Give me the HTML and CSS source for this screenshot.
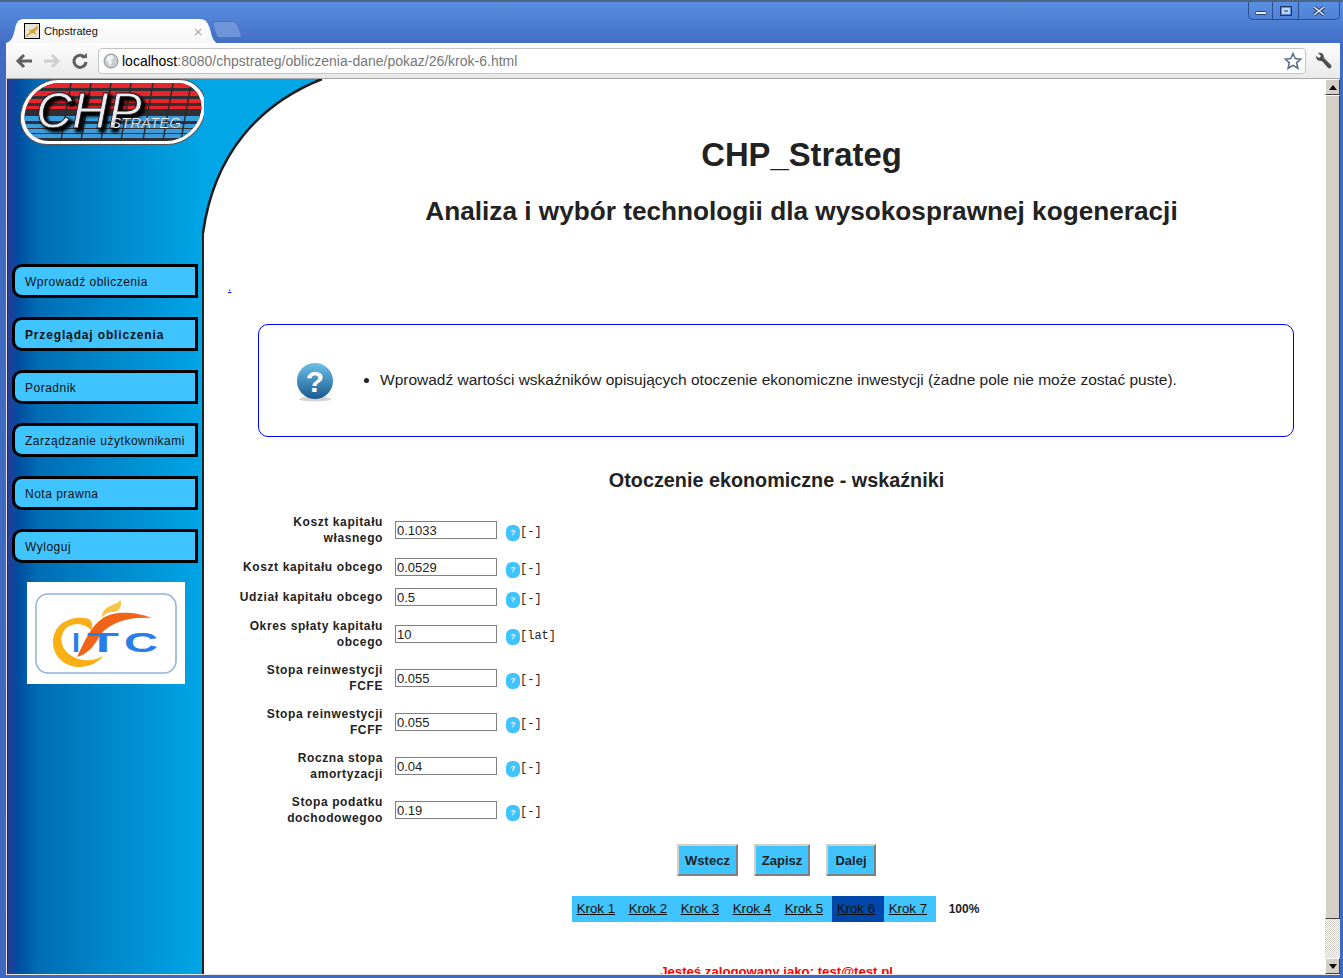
FILE: index.html
```html
<!DOCTYPE html>
<html lang="pl">
<head>
    <meta charset="UTF-8">
    <title>Chpstrateg</title>
    <link rel="stylesheet" href="styles.css">
</head>
<body>
<div class="window">
    <!-- Pasek tytulu i karty -->
    <div class="tabstrip">
        <div class="tab">
            <svg class="favicon" width="16" height="16" viewBox="0 0 16 16">
                <rect x="0.5" y="0.5" width="15" height="15" fill="#e8e4d8" stroke="#000"/>
                <path d="M2 12 L6 9 L5 6 L7 7 L11 5 L13 2 L14 6 L11 8 L12 12 L9 10 L6 11 L3 14 Z" fill="#d8a23c"/>
            </svg>
            <span class="tab-title">Chpstrateg</span>
            <span class="tab-close">&#215;</span>
        </div>
        <div class="new-tab"></div>
        <div class="caption">
            <div class="caption-btn cb-min"><svg width="12" height="4" viewBox="0 0 12 4"><rect x="0.5" y="0.5" width="11" height="3" rx="1" fill="#e8eefa" stroke="#24406f"/></svg></div>
            <div class="caption-btn cb-max"><svg width="12" height="10" viewBox="0 0 12 10"><rect x="0.5" y="0.5" width="11" height="9" fill="none" stroke="#1f3a68"/><rect x="3" y="3" width="6" height="4" fill="none" stroke="#e8eefa" stroke-width="1.5"/></svg></div>
            <div class="caption-btn cb-close"><svg width="12" height="10" viewBox="0 0 12 10"><path d="M1 1 L11 9 M11 1 L1 9" stroke="#24406f" stroke-width="3.4"/><path d="M1 1 L11 9 M11 1 L1 9" stroke="#e8eefa" stroke-width="1.6"/></svg></div>
        </div>
    </div>

    <!-- Pasek narzedzi -->
    <div class="toolbar">
        <svg class="nav-icon" width="18" height="16" viewBox="0 0 18 16"><path d="M9 2 L3 8 L9 14 M3 8 H17" fill="none" stroke="#5f5f5f" stroke-width="3"/></svg>
        <svg class="nav-icon" width="18" height="16" viewBox="0 0 18 16"><path d="M9 2 L15 8 L9 14 M15 8 H1" fill="none" stroke="#cfcfcf" stroke-width="3"/></svg>
        <svg class="nav-icon" width="18" height="16" viewBox="0 0 18 16"><path d="M14 5 A6 6 0 1 0 15 9" fill="none" stroke="#5f5f5f" stroke-width="3"/><path d="M10 5 H16 V0 Z" fill="#5f5f5f"/></svg>
        <div class="omnibox">
            <svg class="globe" width="16" height="16" viewBox="0 0 16 16">
                <circle cx="8" cy="8" r="7" fill="#c9ced4" stroke="#8a8f96"/>
                <path d="M5 3 L9 2 L11 5 L8 7 L9 10 L7 13 L5 9 L3 7 Z" fill="#f2f3f5"/>
            </svg>
            <span class="url"><b>localhost</b>:8080/chpstrateg/obliczenia-dane/pokaz/26/krok-6.html</span>
            <svg class="star" width="18" height="18" viewBox="0 0 18 18"><path d="M9 1.5 L11.2 6.6 L16.8 7.1 L12.6 10.8 L13.9 16.3 L9 13.4 L4.1 16.3 L5.4 10.8 L1.2 7.1 L6.8 6.6 Z" fill="#fff" stroke="#5e6e8c" stroke-width="1.6"/></svg>
        </div>
        <svg class="wrench" width="18" height="18" viewBox="0 0 18 18"><path d="M1 4 L4 6 L6 4 L3 1 C7 0 9 2 9 6 L16 13 C17.500 15 15 17.500 13 16 L7 9 C3 9 1 8 1 4 Z" fill="#505050"/></svg>
    </div>

    <!-- Strona -->
    <div class="viewport">
        <aside class="sidebar">
            <svg class="chp-logo" width="186" height="67" viewBox="0 0 186 67">
                <defs>
                    <clipPath id="pill"><rect x="5" y="4" width="176" height="58" rx="29"/></clipPath>
                    <filter id="soft" x="-10%" y="-20%" width="120%" height="140%"><feGaussianBlur stdDeviation="1.800"/></filter>
                </defs>
                <g transform="translate(5.800 0) skewX(-10)">
                    <rect x="1" y="0.500" width="184" height="65" rx="32" fill="#fff" stroke="#555"/>
                    <g clip-path="url(#pill)">
                        <rect x="0" y="0" width="186" height="66" fill="#303034"/>
                        <g fill="#e8252a">
                            <rect x="0" y="4" width="186" height="5"/>
                            <rect x="0" y="12" width="186" height="5"/>
                            <rect x="0" y="20" width="186" height="4"/>
                            <rect x="0" y="27" width="186" height="3"/>
                        </g>
                        <g fill="#3a9ede">
                            <rect x="0" y="37" width="186" height="5"/>
                            <rect x="0" y="45" width="186" height="4"/>
                            <rect x="0" y="50" width="186" height="4"/>
                            <rect x="0" y="55" width="186" height="4"/>
                        </g>
                        <path d="M46 0 V66 M66 0 V66 M86 0 V66 M106 0 V66 M128 0 V66 M148 0 V66 M166 0 V66" stroke="#2a2a2e" stroke-width="1.500"/>
                    </g>
                </g>
                <text class="chp-big-shadow" x="19" y="52" filter="url(#soft)">CHP</text>
                <text class="chp-big" x="16" y="49">CHP</text>
                <text class="chp-small" x="91" y="49" textLength="70" lengthAdjust="spacingAndGlyphs">STRATEG</text>
            </svg>
            <nav class="menu">
                <a href="#">Wprowadź obliczenia</a>
                <a href="#" class="active">Przeglądaj obliczenia</a>
                <a href="#">Poradnik</a>
                <a href="#">Zarządzanie użytkownikami</a>
                <a href="#">Nota prawna</a>
                <a href="#">Wyloguj</a>
            </nav>
            <div class="itc-box">
                <svg width="158" height="102" viewBox="0 0 158 102">
                    <rect x="9" y="12" width="140" height="79" rx="12" fill="#fff" stroke="#8fb2dc" stroke-width="1.500"/>
                    <path d="M50 75 C62 72 68 62 74 52 C82 42 100 34 125 36 C110 30 88 28 76 36 C64 44 58 58 50 75 Z" fill="#f0641a"/>
                    <path d="M62 37 C44 32 26 42 26 60 C26 76 40 86 54 85 C64 84 72 80 76 74 C66 80 52 80 42 72 C32 64 32 50 42 44 C50 40 58 42 64 48 C66 44 66 40 62 37 Z" fill="#f9b016"/>
                    <path d="M75 36 C74 28 82 24 88 22 C91 21 93 19 93 17 C96 24 92 30 86 30 C81 30 77 32 75 36 Z" fill="#f8c44a"/>
                    <text class="itc-text" x="45" y="70" textLength="8" lengthAdjust="spacingAndGlyphs">I</text>
                    <text class="itc-text" x="60" y="70" textLength="32" lengthAdjust="spacingAndGlyphs">T</text>
                    <text class="itc-text" x="97" y="70" textLength="34" lengthAdjust="spacingAndGlyphs">C</text>
                </svg>
            </div>
        </aside>

        <main class="content">
            <svg class="corner" width="124" height="172" viewBox="-3 0 124 172">
                <path d="M118 0 C55 25 10 75 -1 154 L0 154 L0 0 Z" fill="#00a6e6"/>
                <path d="M118 0 C55 25 10 75 -1 154" fill="none" stroke="#1a1a1a" stroke-width="2.500"/>
            </svg>

            <h1>CHP_Strateg</h1>
            <h2>Analiza i wybór technologii dla wysokosprawnej kogeneracji</h2>
            <a href="#" class="dot-link">.</a>

            <div class="info-box">
                <svg class="info-icon" width="38" height="40" viewBox="0 0 38 40">
                    <defs>
                        <linearGradient id="qblue" x1="0" y1="0" x2="0" y2="1">
                            <stop offset="0" stop-color="#6cc0e8"/>
                            <stop offset="1" stop-color="#1a5a90"/>
                        </linearGradient>
                    </defs>
                    <ellipse cx="19" cy="37" rx="16" ry="2.500" fill="#d4d4d4"/>
                    <circle cx="19" cy="19" r="18" fill="url(#qblue)"/>
                    <text class="info-q" x="19" y="30">?</text>
                </svg>
                <ul>
                    <li>Wprowadź wartości wskaźników opisujących otoczenie ekonomiczne inwestycji (żadne pole nie może zostać puste).</li>
                </ul>
            </div>

            <h3>Otoczenie ekonomiczne - wskaźniki</h3>

            <form class="params">
                <div class="row">
                    <label>Koszt kapitału własnego</label>
                    <input type="text" value="0.1033">
                    <span class="help">?</span><span class="unit">[-]</span>
                </div>
                <div class="row">
                    <label>Koszt kapitału obcego</label>
                    <input type="text" value="0.0529">
                    <span class="help">?</span><span class="unit">[-]</span>
                </div>
                <div class="row">
                    <label>Udział kapitału obcego</label>
                    <input type="text" value="0.5">
                    <span class="help">?</span><span class="unit">[-]</span>
                </div>
                <div class="row">
                    <label>Okres spłaty kapitału obcego</label>
                    <input type="text" value="10">
                    <span class="help">?</span><span class="unit">[lat]</span>
                </div>
                <div class="row">
                    <label>Stopa reinwestycji FCFE</label>
                    <input type="text" value="0.055">
                    <span class="help">?</span><span class="unit">[-]</span>
                </div>
                <div class="row">
                    <label>Stopa reinwestycji FCFF</label>
                    <input type="text" value="0.055">
                    <span class="help">?</span><span class="unit">[-]</span>
                </div>
                <div class="row">
                    <label>Roczna stopa amortyzacji</label>
                    <input type="text" value="0.04">
                    <span class="help">?</span><span class="unit">[-]</span>
                </div>
                <div class="row">
                    <label>Stopa podatku dochodowegoo</label>
                    <input type="text" value="0.19">
                    <span class="help">?</span><span class="unit">[-]</span>
                </div>

                <div class="buttons">
                    <button type="button" class="btn-back">Wstecz</button>
                    <button type="button" class="btn-save">Zapisz</button>
                    <button type="button" class="btn-next">Dalej</button>
                </div>
            </form>

            <div class="steps">
                <div class="step-list">
                    <a href="#">Krok 1</a>
                    <a href="#">Krok 2</a>
                    <a href="#">Krok 3</a>
                    <a href="#">Krok 4</a>
                    <a href="#">Krok 5</a>
                    <a href="#" class="current">Krok 6</a>
                    <a href="#">Krok 7</a>
                </div>
                <span class="percent">100%</span>
            </div>

            <p class="logged">Jesteś zalogowany jako: test@test.pl</p>
        </main>

        <div class="scrollbar">
            <div class="sb-btn"><svg width="8" height="5" viewBox="0 0 8 5"><path d="M4 0 L8 5 H0 Z" fill="#000"/></svg></div>
            <div class="sb-thumb"></div>
            <div class="sb-track"></div>
            <div class="sb-btn"><svg width="8" height="5" viewBox="0 0 8 5"><path d="M0 0 H8 L4 5 Z" fill="#000"/></svg></div>
        </div>
    </div>
</div>
</body>
</html>
```

FILE: styles.css
```css
/* Okno */
html, body {
    margin: 0;
    padding: 0;
    background-color: #3d69be;
}

.window {
    width: 1343px;
    height: 978px;
    overflow: hidden;
    display: flex;
    flex-direction: column;
    box-sizing: border-box;
    padding: 0 3px 3px 6px;
    background: linear-gradient(#5a8fe0 0, #3f6cc2 44px, #3d69be 100%);
    border-top: 2px solid #4b6585;
    font-family: "Liberation Sans", Arial, sans-serif;
}

.tabstrip {
    height: 41px;
    flex: none;
    display: flex;
    align-items: flex-end;
    position: relative;
}

.tab {
    width: 210px;
    height: 24px;
    box-sizing: border-box;
    padding-left: 18px;
    display: flex;
    align-items: center;
    background: linear-gradient(#ffffff, #f6f6f6);
    clip-path: path("M0 24 C6 22 7 18 9 10 C10 4 12 0 18 0 L194 0 C200 0 202 4 204 10 C206 18 207 22 211 24 Z");
}

.favicon {
    flex: none;
}

.tab-title {
    font-size: 11px;
    margin-left: 4px;
    color: #111;
}

.tab-close {
    margin-left: 96px;
    color: #a8a8a8;
    font-size: 15px;
}

.new-tab {
    width: 24px;
    height: 15px;
    margin: 0 0 5px -2px;
    background-color: #6f94d8;
    border: 1px solid #4a72bd;
    border-radius: 4px 5px 3px 3px;
    transform: skewX(18deg);
}

.caption {
    position: absolute;
    right: 0;
    top: 0;
    height: 17px;
    display: flex;
    border: 1px solid #2c4f8c;
    border-top: none;
    border-radius: 0 0 5px 5px;
}

.caption-btn {
    display: flex;
    align-items: center;
    justify-content: center;
    border-right: 1px solid #2c4f8c;
}

.cb-min { width: 24px; padding-top: 5px; box-sizing: border-box; }
.cb-max { width: 25px; }
.cb-close { width: 40px; border-right: none; }

/* Pasek narzedzi */
.toolbar {
    height: 35px;
    flex: none;
    display: flex;
    align-items: center;
    box-sizing: border-box;
    padding-left: 9px;
    gap: 9px;
    background: linear-gradient(#fdfdfd, #e9e9e9);
}

.nav-icon {
    flex: none;
    margin-right: 1px;
}

.omnibox {
    width: 1208px;
    height: 26px;
    margin-left: -1px;
    box-sizing: border-box;
    display: flex;
    align-items: center;
    padding: 0 3px 0 4px;
    background-color: white;
    border: 1px solid #c4c4c4;
    border-radius: 4px;
}

.url {
    font-size: 14px;
    color: #777;
    margin-left: 3px;
    flex: 1;
}

.url b {
    font-weight: normal;
    color: #000;
}

.star {
    flex: none;
}

.wrench {
    flex: none;
}

/* Uklad strony */
.viewport {
    flex: 1;
    min-height: 0;
    display: flex;
    background-color: white;
    border-top: 1px solid #a8a8a8;
    border-left: 1px solid #e8e8e8;
    border-bottom: 1px solid #e8e8e8;
    overflow: hidden;
}

/* Menu boczne */
.sidebar {
    width: 197px;
    flex: none;
    box-sizing: border-box;
    border-left: 1px solid #2a2a50;
    background:
        linear-gradient(transparent 154px, #222 154px) right top / 2px 100% no-repeat,
        linear-gradient(90deg, #2b3a96 0, #004ea0 10px, #006cb4 30px, #0078be 60px, #0088cc 100px, #0094d6 140px, #00a6e6 195px);
    position: relative;
    z-index: 1;
}

.chp-logo {
    display: block;
    margin-left: 12px;
}

.chp-big, .chp-big-shadow {
    font-family: "Liberation Sans", Arial, sans-serif;
    font-style: italic;
    font-size: 50px;
}

.chp-big { fill: #e8e8ee; stroke: #111; stroke-width: 0.8px; }
.chp-big-shadow { fill: #000; stroke: #000; stroke-width: 3px; }

.chp-small {
    font-family: "Liberation Sans", Arial, sans-serif;
    font-style: italic;
    font-size: 14px;
    fill: #f2f2f2;
    stroke: #222;
    stroke-width: 0.2px;
}

.menu {
    display: flex;
    flex-direction: column;
    gap: 19px;
    margin: 118px 0 0 4px;
}

.menu a {
    width: 186px;
    height: 34px;
    box-sizing: border-box;
    display: flex;
    align-items: center;
    padding: 1px 0 0 10px;
    background-color: #40c4ff;
    border: 3px solid #000;
    border-radius: 10px 0 0 10px;
    color: #111;
    font-size: 12px;
    letter-spacing: 0.5px;
    text-decoration: none;
}

.menu a.active {
    font-weight: bold;
    letter-spacing: 0.85px;
}

.itc-box {
    width: 158px;
    height: 102px;
    margin: 19px 0 0 19px;
    background-color: white;
}

.itc-box svg {
    display: block;
}

.itc-text {
    font-family: "Liberation Sans", Arial, sans-serif;
    font-weight: bold;
    font-size: 28px;
    fill: #2a7de8;
}

/* Tresc */
.content {
    flex: 1;
    min-width: 0;
    position: relative;
    box-sizing: border-box;
    padding: 57px 0 0 24px;
    color: #222;
}

.corner {
    position: absolute;
    left: -3px;
    top: 0;
    z-index: 2;
}

.content h1 {
    font-size: 32.800px;
    line-height: 38px;
    margin: 0;
    padding-left: 50px;
    text-align: center;
}

.content h2 {
    font-size: 26.200px;
    line-height: 32px;
    margin: 21px 0 0;
    padding-left: 50px;
    text-align: center;
}

.dot-link {
    display: block;
    font-size: 12px;
    line-height: 16px;
    margin-top: 52px;
    color: #0000cc;
}

.info-box {
    width: 1036px;
    height: 113px;
    box-sizing: border-box;
    margin: 29px 0 0 30px;
    padding: 0 0 0 37px;
    display: flex;
    align-items: center;
    border: 1px solid #0000ff;
    border-radius: 10px;
    background-color: white;
}

.info-icon {
    flex: none;
    margin-top: 2px;
}

.info-q {
    font-family: "Liberation Sans", Arial, sans-serif;
    font-weight: bold;
    font-size: 30px;
    fill: white;
    text-anchor: middle;
}

.info-box ul {
    margin: -2px 0 0 7px;
    padding-left: 39px;
    font-size: 15.500px;
}

.content h3 {
    font-size: 19.800px;
    line-height: 24px;
    margin: 31px 0 0;
    text-align: center;
}

/* Formularz */
.params {
    margin-top: 16px;
    padding-left: 7px;
}

.row {
    display: flex;
    align-items: center;
    min-height: 30px;
}

.row label {
    width: 148px;
    flex: none;
    padding: 6px 0;
    text-align: right;
    font-size: 12px;
    font-weight: bold;
    line-height: 16px;
    letter-spacing: 0.6px;
}

.row input {
    width: 102px;
    height: 18px;
    flex: none;
    box-sizing: border-box;
    margin: 0 0 0 12px;
    padding: 0 1px;
    border: 1px solid #808080;
    font-family: "Liberation Sans", Arial, sans-serif;
    font-size: 13px;
    color: #222;
    outline: none;
}

.help {
    width: 14px;
    height: 16px;
    flex: none;
    margin: 5px 0 0 9px;
    background-color: #40c4ff;
    border-radius: 6px;
    color: white;
    font-size: 8px;
    font-weight: bold;
    line-height: 16px;
    text-align: center;
}

.unit {
    font-family: "Liberation Mono", monospace;
    font-size: 12px;
    margin-top: 3px;
    color: #222;
}

.buttons {
    display: flex;
    justify-content: center;
    gap: 16px;
    margin: 12px 0 0 -7px;
}

.buttons button {
    height: 32px;
    padding: 0;
    background-color: #40c4ff;
    border: 2px solid;
    border-color: #d4d0c8 #808080 #808080 #d4d0c8;
    color: #222;
    font-family: "Liberation Sans", Arial, sans-serif;
    font-size: 13px;
    font-weight: bold;
}

.btn-back { width: 61px; }
.btn-save { width: 56px; }
.btn-next { width: 50px; }

/* Kroki */
.steps {
    display: flex;
    justify-content: center;
    align-items: center;
    gap: 13px;
    margin: 20px 0 0 -2px;
}

.step-list {
    display: flex;
    background-color: #40c4ff;
}

.step-list a {
    width: 52px;
    height: 26px;
    box-sizing: border-box;
    padding-left: 5px;
    line-height: 26px;
    font-size: 13.300px;
    color: #111;
}

.step-list a.current {
    background-color: #0047ab;
}

.percent {
    font-size: 12px;
    font-weight: bold;
}

.logged {
    margin: 42px 0 0;
    text-align: center;
    color: #ff0000;
    font-size: 13.200px;
    font-weight: bold;
    line-height: 16px;
}

/* Pasek przewijania */
.scrollbar {
    width: 15px;
    flex: none;
    display: flex;
    flex-direction: column;
    background-color: #d4d0c8;
}

.sb-btn {
    height: 16px;
    flex: none;
    box-sizing: border-box;
    display: flex;
    align-items: center;
    justify-content: center;
    background-color: #d4d0c8;
    border: 1px solid;
    border-color: #fff #404040 #404040 #fff;
}

.sb-thumb {
    height: 824px;
    flex: none;
    box-sizing: border-box;
    background-color: #d4d0c8;
    border: 1px solid;
    border-color: #fff #404040 #404040 #fff;
}

.sb-track {
    flex: 1;
    background: repeating-conic-gradient(#fff 0 25%, #d4d0c8 0 50%) 0 0 / 2px 2px;
}
```
